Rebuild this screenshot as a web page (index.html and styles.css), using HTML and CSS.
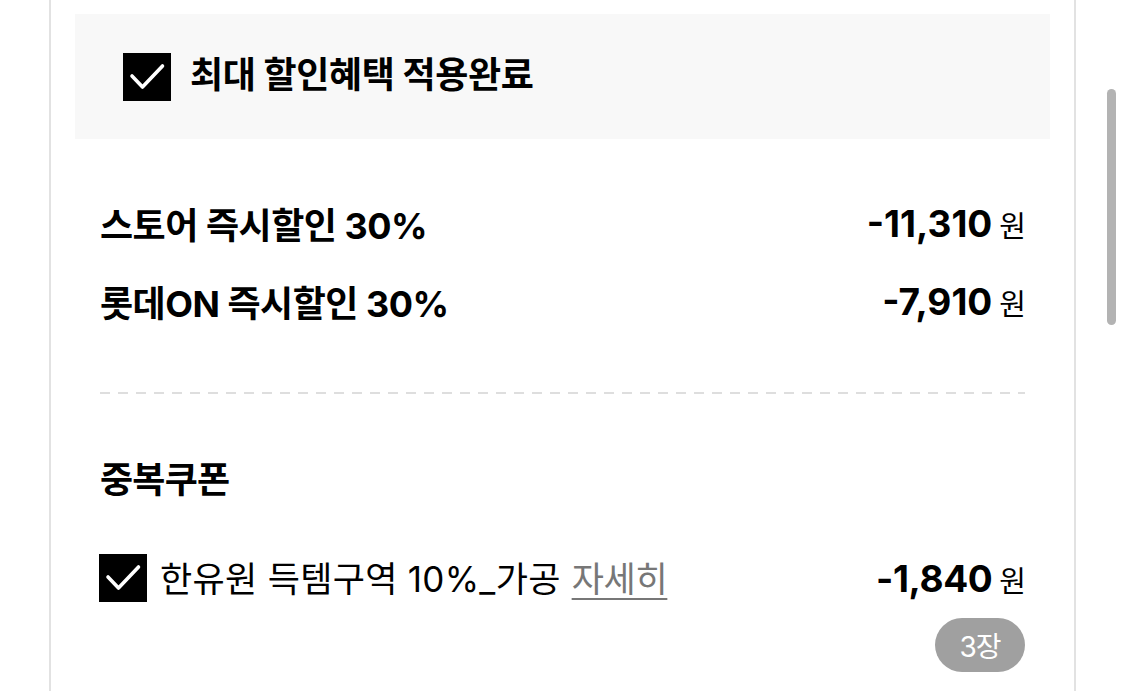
FILE: index.html
```html
<!DOCTYPE html>
<html lang="ko">
<head>
<meta charset="utf-8">
<link rel="stylesheet" href="styles.css">
</head>
<body>
<div class="page">
  <div class="panel">
    <div class="applied">
      <span class="check">
        <svg viewBox="0 0 48 48" width="48" height="48"><polyline points="9,23 19.5,34 39.5,13" fill="none" stroke="#fff" stroke-width="3.6" stroke-linecap="round" stroke-linejoin="round"/></svg>
      </span>
      <span class="applied-text">최대 할인혜택 적용완료</span>
    </div>
    <div class="content">
      <div class="row first">
        <span class="label">스토어 즉시할인 30%</span>
        <span class="amount"><b>-11,310</b><span class="won">원</span></span>
      </div>
      <div class="row second">
        <span class="label">롯데ON 즉시할인 30%</span>
        <span class="amount"><b>-7,910</b><span class="won">원</span></span>
      </div>
      <div class="dash"></div>
      <div class="section-title">중복쿠폰</div>
      <div class="coupon">
        <span class="check small">
          <svg viewBox="0 0 48 48" width="48" height="48"><polyline points="9,23 19.5,34 39.5,13" fill="none" stroke="#fff" stroke-width="3.6" stroke-linecap="round" stroke-linejoin="round"/></svg>
        </span>
        <span class="coupon-name">한유원 득템구역 10%_가공</span>
        <span class="detail">자세히</span>
        <span class="amount push"><b>-1,840</b><span class="won">원</span></span>
      </div>
      <div class="badge-row"><span class="badge">3장</span></div>
    </div>
  </div>
  <div class="scrollbar"></div>
</div>
</body>
</html>
```

FILE: styles.css
```css
* { box-sizing: border-box; }
html, body { margin: 0; padding: 0; background: #fff; }
body {
  font-family: Inter, "Noto Sans CJK KR", sans-serif;
  color: #000;
}
.page {
  position: relative;
  width: 1125px;
  height: 691px;
  overflow: hidden;
}
.panel {
  margin-left: 49px;
  width: 1027px;
  height: 691px;
  border-left: 2px solid #e2e2e2;
  border-right: 2px solid #e2e2e2;
  padding: 14px 24px 0 24px;
}
.applied {
  height: 125px;
  background: #f8f8f8;
  display: flex;
  align-items: center;
  padding-left: 48px;
  gap: 19px;
}
.check {
  width: 48px;
  height: 48px;
  background: #000;
  display: flex;
  flex: none;
}
.applied-text {
  font-size: 36px;
  font-weight: 700;
  letter-spacing: -0.4px;
  line-height: 48px;
  margin-top: -3px;
}
.content {
  padding: 0 25px;
}
.row {
  display: flex;
  justify-content: space-between;
  align-items: center;
  height: 50px;
}
.row.first { margin-top: 59px; }
.row.second { margin-top: 28px; }
.label {
  font-size: 36px;
  font-weight: 700;
  letter-spacing: -0.5px;
}
.amount {
  display: flex;
  align-items: baseline;
  gap: 7px;
}
.amount b {
  font-size: 37px;
  font-weight: 700;
  letter-spacing: 0;
}
.won {
  font-size: 29px;
  font-weight: 400;
  letter-spacing: -1px;
}
.dash {
  margin-top: 66px;
  height: 2px;
  background: repeating-linear-gradient(90deg, #dedede 0 10px, transparent 10px 18px);
}
.section-title {
  margin-top: 61px;
  height: 50px;
  line-height: 50px;
  font-size: 36px;
  font-weight: 700;
  letter-spacing: -0.8px;
}
.coupon {
  margin-top: 49px;
  display: flex;
  align-items: center;
  height: 48px;
}
.coupon .check { margin-left: -1px; }
.coupon-name {
  margin-left: 13px;
  font-size: 35px;
  font-weight: 400;
  letter-spacing: 0.3px;
  margin-top: -4px;
}
.detail {
  margin-left: 11px;
  font-size: 35px;
  font-weight: 400;
  letter-spacing: -0.3px;
  color: #777;
  text-decoration: underline;
  text-underline-offset: 6px;
  text-decoration-thickness: 2px;
  margin-top: -4px;
}
.coupon .amount b { letter-spacing: -0.4px; }
.push { margin-left: auto; }
.badge-row {
  display: flex;
  justify-content: flex-end;
  margin-top: 16px;
}
.badge {
  width: 90px;
  height: 54px;
  border-radius: 27px;
  background: #a0a0a0;
  color: #fff;
  font-size: 28px;
  letter-spacing: -1px;
  display: flex;
  align-items: center;
  justify-content: center;
}
.scrollbar {
  position: absolute;
  left: 1107px;
  top: 89px;
  width: 9px;
  height: 236px;
  border-radius: 5px;
  background: #b3b3b3;
}
```
